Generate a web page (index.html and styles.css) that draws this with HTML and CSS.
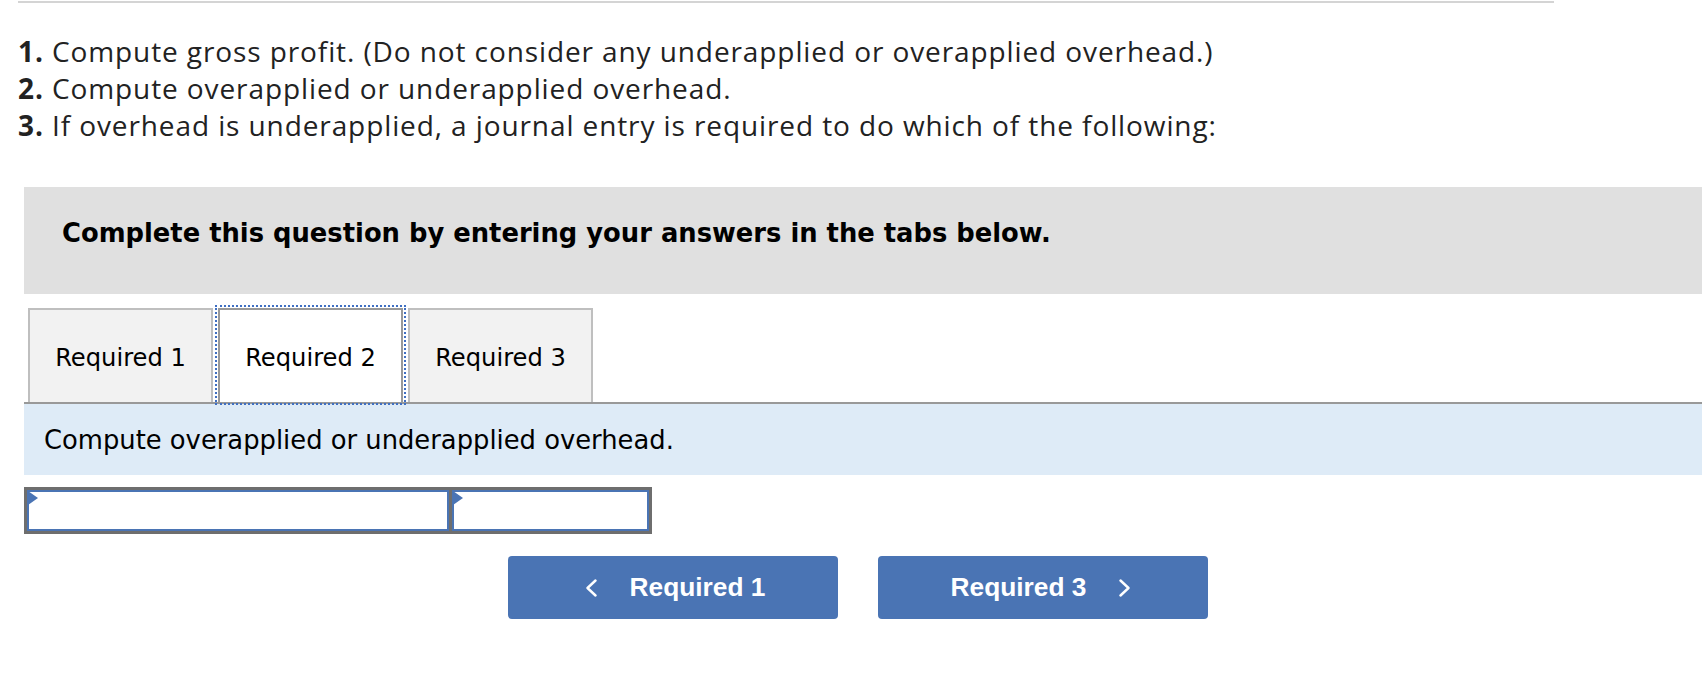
FILE: index.html
```html
<!DOCTYPE html>
<html lang="en">
<head>
<meta charset="utf-8">
<title>Required 2</title>
<link rel="stylesheet" href="styles.css">
</head>
<body>
<div class="page">
  <div class="rule"></div>
  <div class="questions">
    <p class="q"><b>1.</b> Compute gross profit. (Do not consider any underapplied or overapplied overhead.)</p>
    <p class="q"><b>2.</b> Compute overapplied or underapplied overhead.</p>
    <p class="q"><b>3.</b> If overhead is underapplied, a journal entry is required to do which of the following:</p>
  </div>
  <div class="instructions">Complete this question by entering your answers in the tabs below.</div>
  <div class="tabs">
    <div class="tab">Required 1</div>
    <div class="tab active">Required 2</div>
    <div class="tab">Required 3</div>
  </div>
  <div class="tab-panel">Compute overapplied or underapplied overhead.</div>
  <div class="answer-row">
    <div class="cell cell-wide"><span class="flag"></span></div>
    <div class="cell cell-narrow"><span class="flag"></span></div>
  </div>
  <div class="nav">
    <div class="nav-btn nav-prev">
      <svg class="chev" width="12" height="18" viewBox="0 0 12 18"><polyline points="10.5,1.5 2.5,9 10.5,16.5" fill="none" stroke="#ffffff" stroke-width="2.4" stroke-linecap="round" stroke-linejoin="round"/></svg>
      <span>Required 1</span>
    </div>
    <div class="nav-btn nav-next">
      <span>Required 3</span>
      <svg class="chev" width="12" height="18" viewBox="0 0 12 18"><polyline points="1.5,1.5 9.5,9 1.5,16.5" fill="none" stroke="#ffffff" stroke-width="2.4" stroke-linecap="round" stroke-linejoin="round"/></svg>
    </div>
  </div>
</div>
</body>
</html>
```

FILE: styles.css
```css
html, body {
  margin: 0;
  padding: 0;
  background: #ffffff;
}

.page {
  width: 1702px;
  overflow: hidden;
}

.rule {
  margin: 1px 0 0 18px;
  width: 1536px;
  height: 2px;
  background: #d4d4d4;
}

.questions {
  margin: 30px 0 0 18px;
  font-family: "Open Sans", "Noto Sans", sans-serif;
  font-size: 28px;
  letter-spacing: 0.9px;
  line-height: 37px;
  color: #222222;
}

.q {
  margin: 0;
}

.q b {
  font-weight: 700;
}

.instructions {
  margin: 43px 0 0 24px;
  height: 107px;
  box-sizing: border-box;
  padding: 0 0 16px 38px;
  display: flex;
  align-items: center;
  background: #e0e0e0;
  font-family: "DejaVu Sans", Verdana, sans-serif;
  font-weight: 700;
  font-size: 25.8px;
  color: #000000;
}

.tabs {
  margin: 14px 0 0 28px;
  display: flex;
  gap: 5px;
}

.tab {
  width: 185px;
  height: 94px;
  box-sizing: border-box;
  border: 2px solid #bfbfbf;
  border-bottom: none;
  background: #f2f2f2;
  display: flex;
  align-items: center;
  justify-content: center;
  padding-top: 4px;
  font-family: "DejaVu Sans", Verdana, sans-serif;
  font-size: 24.2px;
  color: #000000;
}

.tab.active {
  background: #ffffff;
  border-color: #999999;
  outline: 2px dotted #3f6fc2;
  outline-offset: 1px;
}

.tab-panel {
  margin-left: 24px;
  border-top: 2px solid #999999;
  height: 71px;
  box-sizing: content-box;
  padding: 0 0 0 20px;
  display: flex;
  align-items: center;
  background: #deebf7;
  font-family: "DejaVu Sans", Verdana, sans-serif;
  font-size: 25.8px;
  color: #000000;
}

.answer-row {
  margin: 12px 0 0 24px;
  display: flex;
  gap: 3px;
  padding: 3px;
  width: max-content;
  background: #6e6e6e;
}

.cell {
  position: relative;
  height: 41px;
  box-sizing: border-box;
  border: 2px solid #4a74b4;
  background: #ffffff;
}

.cell-wide {
  width: 422px;
}

.cell-narrow {
  width: 197px;
}

.flag {
  position: absolute;
  top: -1px;
  left: -1px;
  width: 0;
  height: 0;
  border-left: 10px solid #4a74b4;
  border-top: 7px solid transparent;
  border-bottom: 7px solid transparent;
}

.nav {
  margin: 22px 0 0 24px;
  width: 1668px;
  display: flex;
  justify-content: center;
  gap: 40px;
}

.nav-btn {
  width: 330px;
  height: 63px;
  box-sizing: border-box;
  border-radius: 4px;
  background: #4a74b4;
  color: #ffffff;
  display: flex;
  align-items: center;
  justify-content: center;
  gap: 33px;
  font-family: "Liberation Sans", Arial, sans-serif;
  font-weight: 700;
  font-size: 26.3px;
}

.nav-prev {
  padding-left: 4px;
}

.nav-next {
  padding-right: 4px;
}

.chev {
  display: block;
}
```
